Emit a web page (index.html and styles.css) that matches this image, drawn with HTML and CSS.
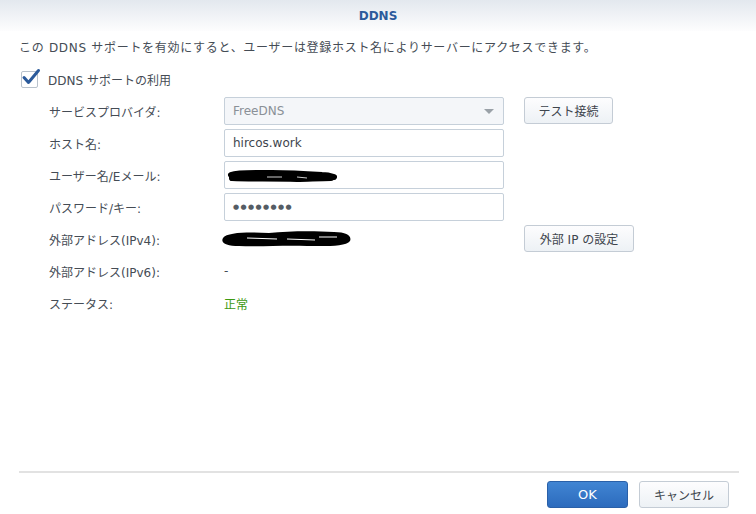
FILE: index.html
```html
<!DOCTYPE html>
<html lang="ja">
<head>
<meta charset="utf-8">
<title>DDNS</title>
<link rel="stylesheet" href="styles.css">
</head>
<body>
<div class="dialog">
  <div class="header">DDNS</div>
  <div class="main">
    <p class="desc">この DDNS サポートを有効にすると、ユーザーは登録ホスト名によりサーバーにアクセスできます。</p>
    <label class="check">
      <span class="box">
        <svg class="tick" width="20" height="18" viewBox="0 0 20 18"><path d="M3 9.5 L7.5 14.5 L17.5 2.5" fill="none" stroke="#2b5a9b" stroke-width="3" stroke-linecap="round" stroke-linejoin="round"/></svg>
      </span>
      <span>DDNS サポートの利用</span>
    </label>
    <div class="form">
      <div class="label">サービスプロバイダ:</div>
      <div class="field select"><span>FreeDNS</span><i class="arrow"></i></div>
      <div class="action"><button class="btn btn-test">テスト接続</button></div>

      <div class="label">ホスト名:</div>
      <div class="field">hircos.work</div>
      <div class="action"></div>

      <div class="label">ユーザー名/Eメール:</div>
      <div class="field">
        <svg class="scribble" width="110" height="14" viewBox="0 0 110 14"><path d="M4 6 C12 3 30 4 45 4 C60 4 80 5 95 6 C101 6 104 7 107 8 M5 9 C25 10 45 9 70 10 C80 10 92 9 104 9" fill="none" stroke="#000" stroke-width="6" stroke-linecap="round"/><path d="M40 8 L55 8 M70 8 L80 9" stroke="#fff" stroke-width="0.8"/></svg>
      </div>
      <div class="action"></div>

      <div class="label">パスワード/キー:</div>
      <div class="field dots">●●●●●●●●</div>
      <div class="action"></div>

      <div class="label">外部アドレス(IPv4):</div>
      <div class="value">
        <svg class="scribble2" width="134" height="20" viewBox="0 0 134 20"><path d="M4 9 C8 3 30 3 50 4 C70 2 95 2 115 3 C128 3 133 7 131 12 C127 18 105 17 88 17 C65 16 40 18 20 17 C8 17 1 14 4 9 Z" fill="#000"/><path d="M28 9 L58 10 M68 10 L96 11 M100 8 L118 8" stroke="#fff" stroke-width="1"/></svg>
      </div>
      <div class="action"><button class="btn btn-ip">外部 IP の設定</button></div>

      <div class="label">外部アドレス(IPv6):</div>
      <div class="value">-</div>
      <div class="action"></div>

      <div class="label">ステータス:</div>
      <div class="value ok">正常</div>
      <div class="action"></div>
    </div>
  </div>
  <div class="footer">
    <button class="btn btn-primary">OK</button>
    <button class="btn btn-cancel">キャンセル</button>
  </div>
</div>
</body>
</html>
```

FILE: styles.css
```css
* { box-sizing: border-box; }
html, body { margin: 0; padding: 0; background: #fff; }
body {
  width: 756px;
  height: 514px;
  overflow: hidden;
  font-family: "DejaVu Sans", "Noto Sans CJK JP", sans-serif;
  font-size: 12px;
  color: #454c55;
}
.dialog {
  height: 514px;
  display: flex;
  flex-direction: column;
}
.header {
  height: 31px;
  line-height: 33px;
  text-align: center;
  font-weight: bold;
  font-size: 12px;
  color: #2b5a9b;
  background: linear-gradient(#e3e8ee, #fdfdfe);
}
.main {
  flex: 1;
  padding: 0 18px 0 19px;
}
.desc {
  margin: 8px 0 0;
  height: 18px;
  line-height: 18px;
  letter-spacing: 0.7px;
}
.check {
  display: flex;
  align-items: center;
  gap: 10px;
  margin-top: 13px;
  margin-left: 2px;
  height: 18px;
}
.box {
  position: relative;
  width: 17px;
  height: 17px;
  border: 1px solid #b9c2cc;
  border-radius: 2px;
  background: #fff;
}
.tick {
  position: absolute;
  left: -1px;
  top: -4px;
}
.form {
  display: grid;
  grid-template-columns: 175px 280px auto;
  grid-auto-rows: 28px;
  row-gap: 4px;
  margin-top: 9px;
  margin-left: 30px;
}
.label, .value {
  display: flex;
  align-items: center;
}
.field {
  display: flex;
  align-items: center;
  border: 1px solid #c6d0da;
  border-radius: 2px;
  padding: 0 8px;
  background: #fff;
  color: #3e454d;
}
.select {
  background: #f4f6f9;
  color: #8a9097;
  justify-content: space-between;
}
.arrow {
  width: 0;
  height: 0;
  border-left: 5px solid transparent;
  border-right: 5px solid transparent;
  border-top: 5px solid #9aa1a8;
  margin-right: 1px;
}
.dots {
  font-size: 7px;
  letter-spacing: 1.4px;
  color: #555c64;
}
.scribble { margin-left: -6px; margin-top: 1px; }
.scribble2 { margin-left: -5px; }
.value.ok { color: #3d9a12; }
.action { display: flex; align-items: flex-start; padding-left: 20px; }
.btn {
  font-family: inherit;
  font-size: 12px;
  height: 27px;
  border: 1px solid #c4ccd5;
  border-radius: 3px;
  background: linear-gradient(#fdfdfe, #edf1f5);
  color: #3e454d;
  padding: 0;
  cursor: pointer;
}
.btn-test { width: 89px; }
.btn-ip { width: 110px; }
.footer {
  margin: 0 17px 0 19px;
  border-top: 2px solid #e2e2e2;
  padding: 8px 10px 6px 0;
  display: flex;
  justify-content: flex-end;
  gap: 11px;
}
.btn-primary {
  width: 81px;
  background: linear-gradient(#4185d3, #2c6bbd);
  border-color: #2a60a8;
  color: #fff;
  font-size: 13px;
}
.btn-cancel { width: 90px; }
```
